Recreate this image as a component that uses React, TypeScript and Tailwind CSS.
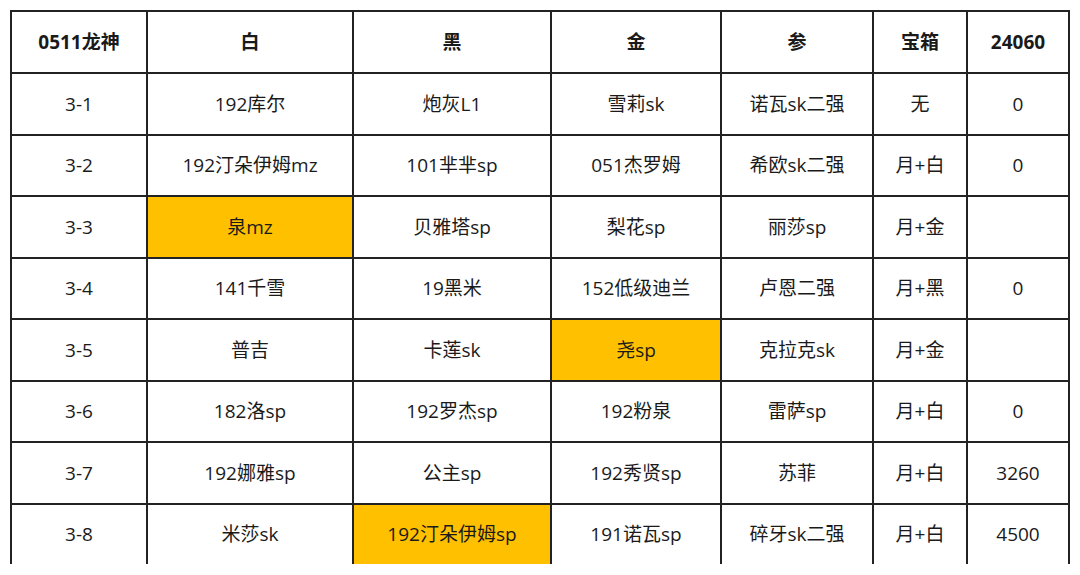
import React from 'react';

const cols = [136, 206, 198, 170, 152, 94, 102];
const headers = ['0511龙神', '白', '黑', '金', '参', '宝箱', '24060'];

type Cell = { t: string; hl?: boolean };

const rows: Cell[][] = [
  [{ t: '3-1' }, { t: '192库尔' }, { t: '炮灰L1' }, { t: '雪莉sk' }, { t: '诺瓦sk二强' }, { t: '无' }, { t: '0' }],
  [{ t: '3-2' }, { t: '192汀朵伊姆mz' }, { t: '101芈芈sp' }, { t: '051杰罗姆' }, { t: '希欧sk二强' }, { t: '月+白' }, { t: '0' }],
  [{ t: '3-3' }, { t: '泉mz', hl: true }, { t: '贝雅塔sp' }, { t: '梨花sp' }, { t: '丽莎sp' }, { t: '月+金' }, { t: '' }],
  [{ t: '3-4' }, { t: '141千雪' }, { t: '19黑米' }, { t: '152低级迪兰' }, { t: '卢恩二强' }, { t: '月+黑' }, { t: '0' }],
  [{ t: '3-5' }, { t: '普吉' }, { t: '卡莲sk' }, { t: '尧sp', hl: true }, { t: '克拉克sk' }, { t: '月+金' }, { t: '' }],
  [{ t: '3-6' }, { t: '182洛sp' }, { t: '192罗杰sp' }, { t: '192粉泉' }, { t: '雷萨sp' }, { t: '月+白' }, { t: '0' }],
  [{ t: '3-7' }, { t: '192娜雅sp' }, { t: '公主sp' }, { t: '192秀贤sp' }, { t: '苏菲' }, { t: '月+白' }, { t: '3260' }],
  [{ t: '3-8' }, { t: '米莎sk' }, { t: '192汀朵伊姆sp', hl: true }, { t: '191诺瓦sp' }, { t: '碎牙sk二强' }, { t: '月+白' }, { t: '4500' }],
];

export default function App() {
  return (
    <div className="w-[1080px] h-[575px] bg-white pt-[10px] pl-[10px]">
      {/* table is cut off by the screenshot, so the last row has no bottom line */}
      <div className="w-[1060px] h-[554px] overflow-hidden">
        <table
          className="table-fixed border-collapse text-[19px] text-[#1a1a1a]"
          style={{ fontFamily: '"Open Sans", "Noto Sans CJK SC", sans-serif' }}
        >
          <colgroup>
            {cols.map((w, i) => (
              <col key={i} style={{ width: w }} />
            ))}
          </colgroup>
          <thead>
            <tr className="h-[62px]">
              {headers.map((h) => (
                <th key={h} className="border-2 border-[#222] text-center font-bold">
                  {h}
                </th>
              ))}
            </tr>
          </thead>
          <tbody>
            {rows.map((r, ri) => (
              <tr key={ri} className="h-[61.5px]">
                {r.map((c, ci) => (
                  <td
                    key={ci}
                    className={`border-2 border-[#222] text-center p-0 ${c.hl ? 'bg-[#ffc000]' : ''}`}
                  >
                    {c.t}
                  </td>
                ))}
              </tr>
            ))}
          </tbody>
        </table>
      </div>
    </div>
  );
}
